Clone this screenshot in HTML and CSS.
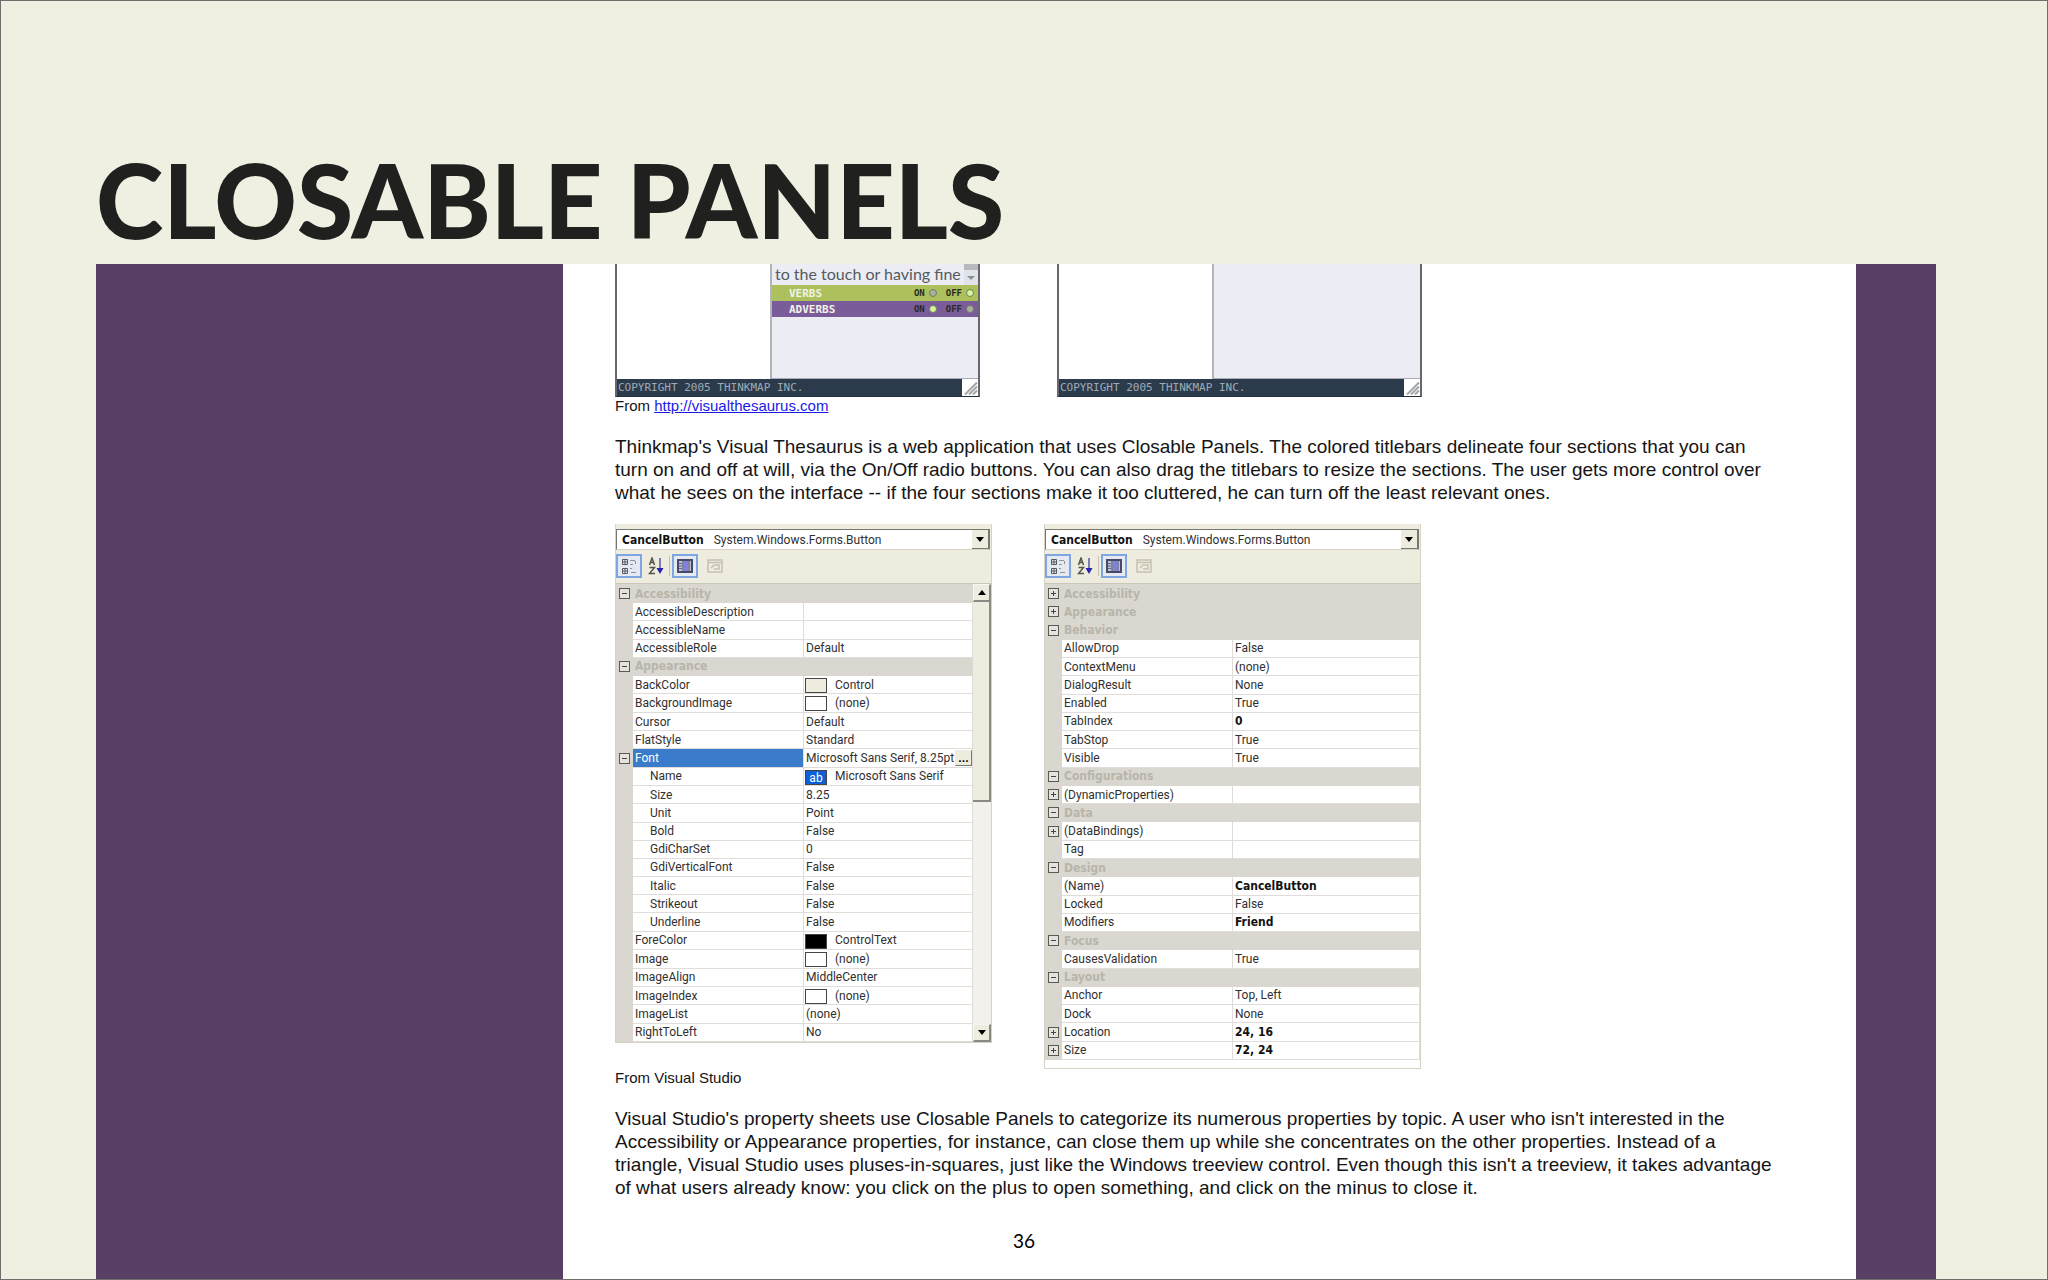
FILE: index.html
```html
<!DOCTYPE html>
<html lang="en">
<head>
  <meta charset="UTF-8" />
  <meta name="viewport" content="width=device-width, initial-scale=1.0" />
  <title>Closable Panels</title>
  <link rel="stylesheet" href="styles.css">
</head>
<body>
  <div class="slide">
    <header class="slide-header">
      <h1>CLOSABLE PANELS</h1>
    </header>

    <main class="stage">
      <article class="sheet">

        <!-- Visual Thesaurus windows -->
        <div class="thesaurus-row">
          <section class="thesaurus">
            <div class="thesaurus-body">
              <div class="word-map"></div>
              <div class="meanings">
                <div class="definition">
                  <span>to the touch or having fine</span>
                  <button type="button" class="def-scroll" aria-label="Scroll down">
                    <svg width="10" height="6" viewBox="0 0 10 6"><path d="M1 1h8L5 5z" fill="#8b9097"/></svg>
                  </button>
                </div>
                <div class="titlebar verbs">
                  <span class="titlebar-name">VERBS</span>
                  <label for="verbsOn">ON</label><input type="radio" id="verbsOn" name="verbs">
                  <label for="verbsOff">OFF</label><input type="radio" id="verbsOff" name="verbs" checked>
                </div>
                <div class="titlebar adverbs">
                  <span class="titlebar-name">ADVERBS</span>
                  <label for="adverbsOn">ON</label><input type="radio" id="adverbsOn" name="adverbs" checked>
                  <label for="adverbsOff">OFF</label><input type="radio" id="adverbsOff" name="adverbs">
                </div>
              </div>
            </div>
            <div class="copyright">
              <span>COPYRIGHT 2005 THINKMAP INC.</span>
              <svg class="grip" width="16" height="16" viewBox="0 0 16 16"><path d="M3 15L15 3M7 15l8-8M11 15l4-4" stroke="#a3a6a8" stroke-width="2" fill="none"/></svg>
            </div>
          </section>

          <section class="thesaurus">
            <div class="thesaurus-body">
              <div class="word-map"></div>
              <div class="meanings"></div>
            </div>
            <div class="copyright">
              <span>COPYRIGHT 2005 THINKMAP INC.</span>
              <svg class="grip" width="16" height="16" viewBox="0 0 16 16"><path d="M3 15L15 3M7 15l8-8M11 15l4-4" stroke="#a3a6a8" stroke-width="2" fill="none"/></svg>
            </div>
          </section>
        </div>
        <p class="source">From <a href="http://visualthesaurus.com">http://visualthesaurus.com</a></p>

        <p class="text">Thinkmap's Visual Thesaurus is a web application that uses Closable Panels. The colored titlebars delineate four sections that you can<br>
          turn on and off at will, via the On/Off radio buttons. You can also drag the titlebars to resize the sections. The user gets more control over<br>
          what he sees on the interface -- if the four sections make it too cluttered, he can turn off the least relevant ones.</p>

        <!-- Visual Studio property sheets -->
        <div class="props-row">
          <section class="props">
            <div class="combo">
              <label for="object1">CancelButton</label>
              <select id="object1"><option>System.Windows.Forms.Button</option></select>
              <span class="combo-arrow"><svg width="8" height="5" viewBox="0 0 8 5"><path d="M0 0h8L4 5z"/></svg></span>
            </div>
            <div class="toolbar">
              <button type="button" class="tool on" aria-label="Categorized">
                <svg width="16" height="16" viewBox="0 0 16 16" fill="none" stroke="#555a60"><path d="M1.500 1.500h5v5h-5zM1.500 10.500h5v5h-5zM4 2v4M2 4h4M4 11v4M2 13h4"/><path d="M9 2.500h5M14.500 3v3M9 6.500h3M9 10.500h2M10 14.500h5" stroke="#8f949b"/></svg>
              </button>
              <button type="button" class="tool" aria-label="Alphabetic">
                <svg width="16" height="18" viewBox="0 0 16 18" fill="none"><path d="M1.500 8l2.500-7 2.500 7M2.500 5.500h3M1.500 10.500h5l-5 6h5.500" stroke="#55554d" stroke-width="1.500"/><path d="M12 1v12" stroke="#5656a8" stroke-width="1.500"/><path d="M8.500 11h7L12 17z" fill="#2c22b0"/></svg>
              </button>
              <span class="tool-line"></span>
              <button type="button" class="tool on" aria-label="Properties">
                <svg width="16" height="14" viewBox="0 0 16 14"><path d="M1 1h14v12H1z" fill="#b9c0d8" stroke="#454b66" stroke-width="2"/><path d="M6 1v12M12 1v12" stroke="#454b66"/><path d="M7 2h4v10H7z" fill="#8280dc"/><path d="M2 4.500h3M2 7h3M2 9.500h3" stroke="#666b80"/></svg>
              </button>
              <button type="button" class="tool" aria-label="Property pages" disabled>
                <svg width="16" height="14" viewBox="0 0 16 14" fill="none" stroke="#c5c2b3" stroke-width="1.500"><path d="M1 1h14v12H1zM1 3.500h14M4 9l3-3h5v4H7"/></svg>
              </button>
            </div>
            <div class="grid-wrap">
              <table class="grid short">
                <colgroup><col class="c-gutter"><col class="c-name"><col></colgroup>
                <tr class="cat"><td><button class="toggle minus" type="button" aria-label="Collapse"></button></td><th colspan="2">Accessibility</th></tr>
                <tr><td></td><td>AccessibleDescription</td><td></td></tr>
                <tr><td></td><td>AccessibleName</td><td></td></tr>
                <tr><td></td><td>AccessibleRole</td><td>Default</td></tr>
                <tr class="cat"><td><button class="toggle minus" type="button" aria-label="Collapse"></button></td><th colspan="2">Appearance</th></tr>
                <tr><td></td><td>BackColor</td><td><span class="swatch control"></span>Control</td></tr>
                <tr><td></td><td>BackgroundImage</td><td><span class="swatch"></span>(none)</td></tr>
                <tr><td></td><td>Cursor</td><td>Default</td></tr>
                <tr><td></td><td>FlatStyle</td><td>Standard</td></tr>
                <tr class="selected"><td><button class="toggle minus" type="button" aria-label="Collapse"></button></td><td>Font</td><td><div class="with-button">Microsoft Sans Serif, 8.25pt<button type="button" class="more" aria-label="Edit font">...</button></div></td></tr>
                <tr class="sub"><td></td><td>Name</td><td><span class="swatch ab">ab</span>Microsoft Sans Serif</td></tr>
                <tr class="sub"><td></td><td>Size</td><td>8.25</td></tr>
                <tr class="sub"><td></td><td>Unit</td><td>Point</td></tr>
                <tr class="sub"><td></td><td>Bold</td><td>False</td></tr>
                <tr class="sub"><td></td><td>GdiCharSet</td><td>0</td></tr>
                <tr class="sub"><td></td><td>GdiVerticalFont</td><td>False</td></tr>
                <tr class="sub"><td></td><td>Italic</td><td>False</td></tr>
                <tr class="sub"><td></td><td>Strikeout</td><td>False</td></tr>
                <tr class="sub"><td></td><td>Underline</td><td>False</td></tr>
                <tr><td></td><td>ForeColor</td><td><span class="swatch black"></span>ControlText</td></tr>
                <tr><td></td><td>Image</td><td><span class="swatch"></span>(none)</td></tr>
                <tr><td></td><td>ImageAlign</td><td>MiddleCenter</td></tr>
                <tr><td></td><td>ImageIndex</td><td><span class="swatch"></span>(none)</td></tr>
                <tr><td></td><td>ImageList</td><td>(none)</td></tr>
                <tr><td></td><td>RightToLeft</td><td>No</td></tr>
              </table>
              <div class="scrollbar">
                <button type="button" aria-label="Scroll up"><svg width="8" height="5" viewBox="0 0 8 5"><path d="M0 5h8L4 0z"/></svg></button>
                <div class="thumb"></div>
                <div class="track"></div>
                <button type="button" aria-label="Scroll down"><svg width="8" height="5" viewBox="0 0 8 5"><path d="M0 0h8L4 5z"/></svg></button>
              </div>
            </div>
          </section>

          <section class="props">
            <div class="combo">
              <label for="object2">CancelButton</label>
              <select id="object2"><option>System.Windows.Forms.Button</option></select>
              <span class="combo-arrow"><svg width="8" height="5" viewBox="0 0 8 5"><path d="M0 0h8L4 5z"/></svg></span>
            </div>
            <div class="toolbar">
              <button type="button" class="tool on" aria-label="Categorized">
                <svg width="16" height="16" viewBox="0 0 16 16" fill="none" stroke="#555a60"><path d="M1.500 1.500h5v5h-5zM1.500 10.500h5v5h-5zM4 2v4M2 4h4M4 11v4M2 13h4"/><path d="M9 2.500h5M14.500 3v3M9 6.500h3M9 10.500h2M10 14.500h5" stroke="#8f949b"/></svg>
              </button>
              <button type="button" class="tool" aria-label="Alphabetic">
                <svg width="16" height="18" viewBox="0 0 16 18" fill="none"><path d="M1.500 8l2.500-7 2.500 7M2.500 5.500h3M1.500 10.500h5l-5 6h5.500" stroke="#55554d" stroke-width="1.500"/><path d="M12 1v12" stroke="#5656a8" stroke-width="1.500"/><path d="M8.500 11h7L12 17z" fill="#2c22b0"/></svg>
              </button>
              <span class="tool-line"></span>
              <button type="button" class="tool on" aria-label="Properties">
                <svg width="16" height="14" viewBox="0 0 16 14"><path d="M1 1h14v12H1z" fill="#b9c0d8" stroke="#454b66" stroke-width="2"/><path d="M6 1v12M12 1v12" stroke="#454b66"/><path d="M7 2h4v10H7z" fill="#8280dc"/><path d="M2 4.500h3M2 7h3M2 9.500h3" stroke="#666b80"/></svg>
              </button>
              <button type="button" class="tool" aria-label="Property pages" disabled>
                <svg width="16" height="14" viewBox="0 0 16 14" fill="none" stroke="#c5c2b3" stroke-width="1.500"><path d="M1 1h14v12H1zM1 3.500h14M4 9l3-3h5v4H7"/></svg>
              </button>
            </div>
            <div class="grid-wrap">
              <table class="grid tall">
                <colgroup><col class="c-gutter"><col class="c-name"><col></colgroup>
                <tr class="cat"><td><button class="toggle plus" type="button" aria-label="Expand"></button></td><th colspan="2">Accessibility</th></tr>
                <tr class="cat"><td><button class="toggle plus" type="button" aria-label="Expand"></button></td><th colspan="2">Appearance</th></tr>
                <tr class="cat"><td><button class="toggle minus" type="button" aria-label="Collapse"></button></td><th colspan="2">Behavior</th></tr>
                <tr><td></td><td>AllowDrop</td><td>False</td></tr>
                <tr><td></td><td>ContextMenu</td><td>(none)</td></tr>
                <tr><td></td><td>DialogResult</td><td>None</td></tr>
                <tr><td></td><td>Enabled</td><td>True</td></tr>
                <tr><td></td><td>TabIndex</td><td><b>0</b></td></tr>
                <tr><td></td><td>TabStop</td><td>True</td></tr>
                <tr><td></td><td>Visible</td><td>True</td></tr>
                <tr class="cat"><td><button class="toggle minus" type="button" aria-label="Collapse"></button></td><th colspan="2">Configurations</th></tr>
                <tr><td><button class="toggle plus" type="button" aria-label="Expand"></button></td><td>(DynamicProperties)</td><td></td></tr>
                <tr class="cat"><td><button class="toggle minus" type="button" aria-label="Collapse"></button></td><th colspan="2">Data</th></tr>
                <tr><td><button class="toggle plus" type="button" aria-label="Expand"></button></td><td>(DataBindings)</td><td></td></tr>
                <tr><td></td><td>Tag</td><td></td></tr>
                <tr class="cat"><td><button class="toggle minus" type="button" aria-label="Collapse"></button></td><th colspan="2">Design</th></tr>
                <tr><td></td><td>(Name)</td><td><b>CancelButton</b></td></tr>
                <tr><td></td><td>Locked</td><td>False</td></tr>
                <tr><td></td><td>Modifiers</td><td><b>Friend</b></td></tr>
                <tr class="cat"><td><button class="toggle minus" type="button" aria-label="Collapse"></button></td><th colspan="2">Focus</th></tr>
                <tr><td></td><td>CausesValidation</td><td>True</td></tr>
                <tr class="cat"><td><button class="toggle minus" type="button" aria-label="Collapse"></button></td><th colspan="2">Layout</th></tr>
                <tr><td></td><td>Anchor</td><td>Top, Left</td></tr>
                <tr><td></td><td>Dock</td><td>None</td></tr>
                <tr><td><button class="toggle plus" type="button" aria-label="Expand"></button></td><td>Location</td><td><b>24, 16</b></td></tr>
                <tr><td><button class="toggle plus" type="button" aria-label="Expand"></button></td><td>Size</td><td><b>72, 24</b></td></tr>
              </table>
            </div>
            <div class="grid-end"></div>
          </section>
        </div>
        <p class="source">From Visual Studio</p>

        <p class="text">Visual Studio's property sheets use Closable Panels to categorize its numerous properties by topic. A user who isn't interested in the<br>
          Accessibility or Appearance properties, for instance, can close them up while she concentrates on the other properties. Instead of a<br>
          triangle, Visual Studio uses pluses-in-squares, just like the Windows treeview control. Even though this isn't a treeview, it takes advantage<br>
          of what users already know: you click on the plus to open something, and click on the minus to close it.</p>
      </article>
    </main>
    <div class="page-number">36</div>
  </div>
</body>
</html>
```
FILE: styles.css
```css
* {
  box-sizing: border-box;
}

body {
  margin: 0;
  font-family: "Liberation Sans", Arial, sans-serif;
  color: #151515;
}

button {
  padding: 0;
  font-family: inherit;
}

.slide {
  position: relative;
  display: flex;
  flex-direction: column;
  min-height: 100vh;
  background: #eff0e2;
  border: 1px solid #6e6e6a;
}

.slide-header {
  display: flex;
  align-items: flex-end;
  height: 263px;
  padding: 0 95px 4px;
}

.slide-header h1 {
  margin: 0;
  font-family: Lato, "Open Sans", sans-serif;
  font-size: 102px;
  font-weight: 900;
  line-height: 120px;
  color: #20211f;
}

.stage {
  flex: 1;
  display: flex;
  margin: 0 111px 0 95px;
  padding: 0 80px 0 467px;
  background: #593f65;
}

.sheet {
  flex: 1;
  min-width: 0;
  padding: 0 52px;
  background: #fefefe;
}

.source {
  margin: 0;
  font-size: 15px;
  line-height: 18px;
}

.source a {
  color: #1a1ae6;
}

.text {
  margin: 20px 0;
  font-size: 19px;
  line-height: 23px;
  white-space: nowrap;
}

.page-number {
  position: absolute;
  bottom: 26px;
  left: 0;
  right: 0;
  text-align: center;
  font-family: Lato, sans-serif;
  font-size: 19px;
  line-height: 24px;
  color: #000;
}

/* Visual Thesaurus */
.thesaurus-row {
  display: flex;
  gap: 77px;
}

.thesaurus {
  width: 365px;
  border: 2px solid #66666c;
  border-top: none;
  border-bottom: 1px solid #22303c;
}

.thesaurus-body {
  display: flex;
  height: 115px;
}

.word-map {
  width: 153px;
  background: #fff;
}

.meanings {
  flex: 1;
  background: #ebecf4;
  border-left: 2px solid #b4b5bb;
  border-bottom: 1px solid #a9abb5;
}

.definition {
  display: flex;
  justify-content: space-between;
  height: 21px;
  padding-left: 3px;
  font-family: Lato, sans-serif;
  font-size: 16px;
  line-height: 19px;
  color: #555a60;
}

.def-scroll {
  width: 14px;
  border: none;
  border-top: 6px solid #b6b9be;
  background: #e0e3e8;
  line-height: 0;
}

.titlebar {
  display: flex;
  align-items: center;
  height: 16px;
  padding: 0 4px 0 17px;
  font-family: "DejaVu Sans Mono", monospace;
  font-size: 9px;
  font-weight: bold;
}

.titlebar-name {
  flex: 1;
  font-size: 11px;
  color: #f2f2e6;
}

.titlebar label {
  color: #2c2a20;
}

.titlebar input {
  appearance: none;
  width: 8px;
  height: 8px;
  margin: 0 0 0 4px;
  border: 1px solid #6f7c68;
  border-radius: 50%;
  background: #a9b09a;
}

.titlebar input:checked {
  background: #d8f59a;
}

.titlebar input + label {
  margin-left: 9px;
}

.verbs {
  background: #acc05c;
}

.adverbs {
  background: #7a5c9a;
}

.copyright {
  display: flex;
  justify-content: space-between;
  height: 17px;
  padding-left: 1px;
  background: #2c3b4c;
  font-family: "DejaVu Sans Mono", monospace;
  font-size: 11px;
  line-height: 17px;
  color: #9fabb5;
}

.grip {
  height: 17px;
  background: #fff;
}

/* Property sheets */
.props-row {
  display: flex;
  align-items: flex-start;
  gap: 52px;
  font-family: Roboto, Tahoma, sans-serif;
  font-size: 12px;
  line-height: 16px;
  color: #303030;
}

.props {
  width: 377px;
  padding-top: 5px;
  border: 1px solid #d6d3c4;
  border-top: none;
  background: #eeebdf;
}

.combo {
  display: flex;
  height: 21px;
  margin: 0 1px 0 0;
  padding-left: 5px;
  background: #fff;
  border: 1px solid #77766f;
  border-bottom-color: #d6d3c4;
}

.combo label,
.grid th,
.grid b {
  font-family: "DejaVu Sans Condensed", "DejaVu Sans", sans-serif;
  font-weight: bold;
}

.combo label {
  line-height: 20px;
  color: #111;
}

.combo select {
  flex: 1;
  appearance: none;
  margin: 0 0 0 10px;
  padding: 0;
  border: none;
  background: none;
  font-family: inherit;
  font-size: 12px;
  color: #303030;
}

.combo-arrow {
  display: flex;
  align-items: center;
  justify-content: center;
  width: 17px;
  background: #eeebdf;
  border-right: 1px solid #77766f;
  border-bottom: 1px solid #77766f;
  pointer-events: none;
}

.toolbar {
  display: flex;
  align-items: center;
  height: 33px;
  padding-bottom: 2px;
}

.tool {
  display: flex;
  align-items: center;
  justify-content: center;
  width: 26px;
  height: 24px;
  border: 1px solid transparent;
  background: none;
}

.tool.on {
  border: 2px solid #7fa6e0;
  background: #e4e9f2;
}

.tool-line {
  width: 1px;
  height: 20px;
  margin: 0 2px 0 0;
  background: #c5c2b3;
}

.tool + .tool {
  margin-left: 1px;
}

.tool.on + .tool:disabled {
  margin-left: 4px;
}

.grid-wrap {
  display: flex;
  border-top: 1px solid #c9c6ba;
}

.grid {
  flex: 1;
  table-layout: fixed;
  border-collapse: collapse;
  background: #fff;
}

.short {
  height: 458px;
}

.tall {
  height: 476px;
}

.c-gutter {
  width: 16px;
}

.c-name {
  width: 171px;
}

.grid td,
.grid th {
  padding: 0 2px;
  border: 1px solid #dfdcda;
  text-align: left;
  white-space: nowrap;
}

.grid td:first-child,
.grid .cat th {
  border-color: #dad7d0;
  background: #dad7d0;
}

.grid td:first-child {
  padding: 0;
}

.grid .cat th {
  color: #b7b5aa;
}

.grid .sub td:nth-child(2) {
  padding-left: 17px;
}

.grid .selected td:nth-child(2) {
  background: #3a7ccb;
  color: #fff;
}

.grid b {
  color: #111;
}

.toggle {
  display: block;
  width: 11px;
  height: 11px;
  margin: 0 auto;
  border: 1px solid #5a5a55;
}

.minus {
  background: linear-gradient(#444, #444) center / 5px 1px no-repeat #e6e3dc;
}

.plus {
  background: linear-gradient(#444, #444) center / 5px 1px no-repeat,
    linear-gradient(#444, #444) center / 1px 5px no-repeat #e6e3dc;
}

.swatch {
  display: inline-block;
  width: 22px;
  height: 15px;
  margin: 0 8px 0 -1px;
  border: 1px solid #444;
  vertical-align: middle;
}

.swatch.control {
  background: #eeebdf;
}

.swatch.black {
  background: #000;
}

.swatch.ab {
  background: #0d5fd8;
  color: #fff;
  text-align: center;
  line-height: 14px;
}

.with-button {
  display: flex;
  justify-content: space-between;
}

.more {
  width: 17px;
  height: 16px;
  margin-right: -2px;
  border: 1px solid #eeebdf;
  border-right-color: #77766f;
  border-bottom-color: #77766f;
  background: #eeebdf;
  font-size: 12px;
  font-weight: bold;
  line-height: 10px;
}

.scrollbar {
  display: flex;
  flex-direction: column;
  width: 18px;
  background: #f4f1ec;
}

.scrollbar button {
  display: flex;
  align-items: center;
  justify-content: center;
  height: 18px;
  border: 1px solid #f8f6ee;
  border-right: 2px solid #8b8a82;
  border-bottom: 2px solid #8b8a82;
  background: #eeebdf;
}

.thumb {
  flex: 198;
  border-right: 2px solid #8b8a82;
  border-bottom: 2px solid #8b8a82;
  background: #eeebdf;
}

.track {
  flex: 223;
}

.grid-end {
  height: 8px;
  background: #fff;
}
```
